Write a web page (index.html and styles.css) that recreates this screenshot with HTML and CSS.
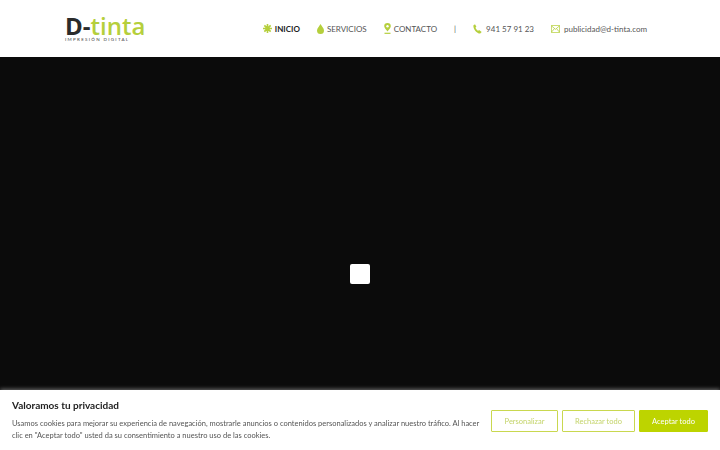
FILE: index.html
```html
<!DOCTYPE html>
<html lang="es">
<head>
    <meta charset="UTF-8">
    <meta name="viewport" content="width=device-width, initial-scale=1.0">
    <title>D-tinta Impresión Digital</title>
    <link rel="stylesheet" href="styles.css">
</head>
<body>
    <header class="header">
        <a href="#" class="logo">
            <span class="logo-name"><span class="logo-d">D-</span>tinta</span>
            <span class="logo-sub">IMPRESIÓN DIGITAL</span>
        </a>
        <nav class="nav">
            <a href="#" class="nav-link active">
                <svg class="nav-icon" width="9" height="9" viewBox="0 0 10 10"><path d="M5 0v10M0 5h10M1.5 1.5l7 7M8.5 1.5l-7 7" stroke="#b5cf3c" stroke-width="1.8"/></svg>
                INICIO
            </a>
            <a href="#" class="nav-link">
                <svg class="nav-icon" width="7" height="10" viewBox="0 0 7 10"><path d="M3.5 0C2.5 2 0 4.2 0 6.5a3.5 3.5 0 0 0 7 0C7 4.2 4.5 2 3.5 0z" fill="#b5cf3c"/></svg>
                SERVICIOS
            </a>
            <a href="#" class="nav-link">
                <svg class="nav-icon" width="7" height="11" viewBox="0 0 7 11"><path d="M3.500 0a3.300 3.300 0 0 0-3.300 3.300C.2 5 2.500 7.200 3.500 8.500 4.500 7.200 6.800 5 6.800 3.300A3.300 3.300 0 0 0 3.500 0z" fill="#b5cf3c"/><circle cx="3.500" cy="3.300" r="1.200" fill="#fff"/><path d="M.5 10.300h6" stroke="#b5cf3c" stroke-width="1.200"/></svg>
                CONTACTO
            </a>
            <span class="nav-sep">|</span>
            <a href="#" class="nav-link phone">
                <svg class="nav-icon" width="9" height="10" viewBox="0 0 9 10"><path d="M.3 1.500 2 .2l1.400 2.500-.9.800c.3 1.300 1.200 2.600 2.700 3.300l.9-.7L8.700 8 7.200 9.600C3.500 9.500.4 5.500.3 1.500z" fill="#b5cf3c"/></svg>
                941 57 91 23
            </a>
            <a href="#" class="nav-link mail">
                <svg class="nav-icon" width="9" height="8" viewBox="0 0 9 8"><path d="M.4.4h8.200v7.200H.4zM.4.8l4.100 3.500L8.600.8M.4 7.200l3-3.500M8.600 7.200l-3-3.500" fill="none" stroke="#b5cf3c" stroke-width=".8"/></svg>
                publicidad@d-tinta.com
            </a>
        </nav>
    </header>

    <section class="hero">
        <div class="loader"></div>
    </section>

    <div class="cookie-banner">
        <div class="cookie-text">
            <h2 class="cookie-title">Valoramos tu privacidad</h2>
            <p class="cookie-desc">Usamos cookies para mejorar su experiencia de navegación, mostrarle anuncios o contenidos personalizados y analizar nuestro tráfico. Al hacer clic en "Aceptar todo" usted da su consentimiento a nuestro uso de las cookies.</p>
        </div>
        <div class="cookie-buttons">
            <button class="cookie-btn btn-custom">Personalizar</button>
            <button class="cookie-btn btn-reject">Rechazar todo</button>
            <button class="cookie-btn btn-accept">Aceptar todo</button>
        </div>
    </div>
</body>
</html>
```

FILE: styles.css
```css
html, body {
    height: 100%;
}
body {
    margin: 0;
    overflow: hidden;
    font-family: Lato, "Liberation Sans", sans-serif;
    background-color: #0b0b0b;
}
a {
    text-decoration: none;
}
.header {
    height: 57px;
    box-sizing: border-box;
    padding: 0 73px 0 65px;
    background-color: #fff;
    display: flex;
    justify-content: space-between;
    align-items: center;
}
.logo {
    display: flex;
    flex-direction: column;
    width: 76px;
    margin-top: 1px;
}
.logo-name {
    font-family: "Open Sans", sans-serif;
    font-size: 24px;
    font-weight: 600;
    line-height: 22px;
    color: #b5cf3c;
    white-space: nowrap;
}
.logo-d {
    color: #2b2b2b;
    font-weight: 700;
}
.logo-sub {
    font-size: 4.500px;
    line-height: 6px;
    letter-spacing: 1.300px;
    color: #444;
    white-space: nowrap;
}
.nav {
    display: flex;
    align-items: center;
    font-size: 8px;
}
.nav-link {
    display: flex;
    align-items: center;
    gap: 3px;
    color: #555;
    margin-right: 17px;
    font-size: 8px;
    white-space: nowrap;
}
.nav-link.active {
    color: #222;
    font-weight: 700;
}
.nav-sep {
    color: #666;
    margin-right: 17px;
}
.phone {
    gap: 4px;
    margin-right: 17px;
}
.mail {
    gap: 4px;
    margin-right: 0;
}
.hero {
    height: 434px;
    background-color: #0b0b0b;
    display: flex;
    align-items: center;
    justify-content: center;
}
.loader {
    width: 20px;
    height: 20px;
    background-color: #fff;
    border-radius: 2px;
}
.cookie-banner {
    position: fixed;
    left: 0;
    right: 0;
    bottom: 0;
    height: 60px;
    box-sizing: border-box;
    padding: 0 12px;
    background-color: #fff;
    box-shadow: 0 -1px 4px rgba(255, 255, 255, 0.4);
    display: flex;
    align-items: center;
    justify-content: space-between;
}
.cookie-text {
    width: 468px;
}
.cookie-title {
    margin: 0 0 7px;
    font-size: 10px;
    font-weight: 700;
    line-height: 12px;
    color: #222;
}
.cookie-desc {
    margin: 0;
    font-size: 7.500px;
    line-height: 12px;
    color: #555;
}
.cookie-buttons {
    display: flex;
    gap: 4px;
    margin-top: 2px;
}
.cookie-btn {
    height: 22px;
    padding: 0;
    font-family: Lato, "Liberation Sans", sans-serif;
    font-size: 7.500px;
    border: 1px solid #c9d84f;
    border-radius: 1px;
    background-color: #fff;
    color: #c4d46a;
}
.btn-custom {
    width: 67px;
}
.btn-reject {
    width: 73px;
}
.btn-accept {
    width: 69px;
    background-color: #bdd400;
    border-color: #bdd400;
    color: #fff;
}
```
